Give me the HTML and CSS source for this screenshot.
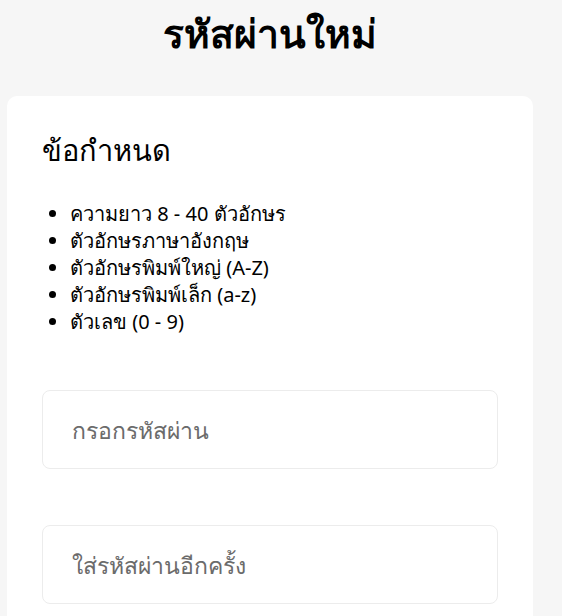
FILE: index.html
```html
<!DOCTYPE html>
<html lang="th">
<head>
<meta charset="UTF-8">
<meta name="viewport" content="width=device-width, initial-scale=1.0">
<title>รหัสผ่านใหม่</title>
<link rel="stylesheet" href="styles.css">
</head>
<body>
    <div class="page">
        <h1 class="title">รหัสผ่านใหม่</h1>
        <div class="card">
            <h2 class="rules-title">ข้อกำหนด</h2>
            <ul class="rules">
                <li>ความยาว 8 - 40 ตัวอักษร</li>
                <li>ตัวอักษรภาษาอังกฤษ</li>
                <li>ตัวอักษรพิมพ์ใหญ่ (A-Z)</li>
                <li>ตัวอักษรพิมพ์เล็ก (a-z)</li>
                <li>ตัวเลข (0 - 9)</li>
            </ul>
            <input type="password" class="field" placeholder="กรอกรหัสผ่าน">
            <input type="password" class="field" placeholder="ใส่รหัสผ่านอีกครั้ง">
        </div>
    </div>
</body>
</html>
```

FILE: styles.css
```css
body {
    margin: 0;
    background-color: #f6f6f6;
    font-family: "Noto Sans", "Open Sans", sans-serif;
    color: #000;
}

.page {
    width: 526px;
    margin: 0 7px;
}

.title {
    text-align: center;
    font-size: 39px;
    font-weight: 600;
    line-height: 1.2;
    margin: 0;
    padding-top: 10px;
    height: 86px;
}

.card {
    background-color: #fff;
    border-radius: 10px;
    padding: 32px 35px 20px;
}

.rules-title {
    font-size: 29px;
    font-weight: 500;
    margin: 0 0 26px;
}

.rules {
    margin: 0 0 55px;
    padding-left: 28px;
    font-size: 20px;
    line-height: 27px;
}

.field {
    display: block;
    box-sizing: border-box;
    width: 100%;
    height: 79px;
    border: 1px solid #ececec;
    border-radius: 8px;
    padding: 0 29px;
    font-family: inherit;
    font-size: 23px;
    margin-bottom: 56px;
    outline: none;
}

.field::placeholder {
    color: #6b6b6b;
}
```
